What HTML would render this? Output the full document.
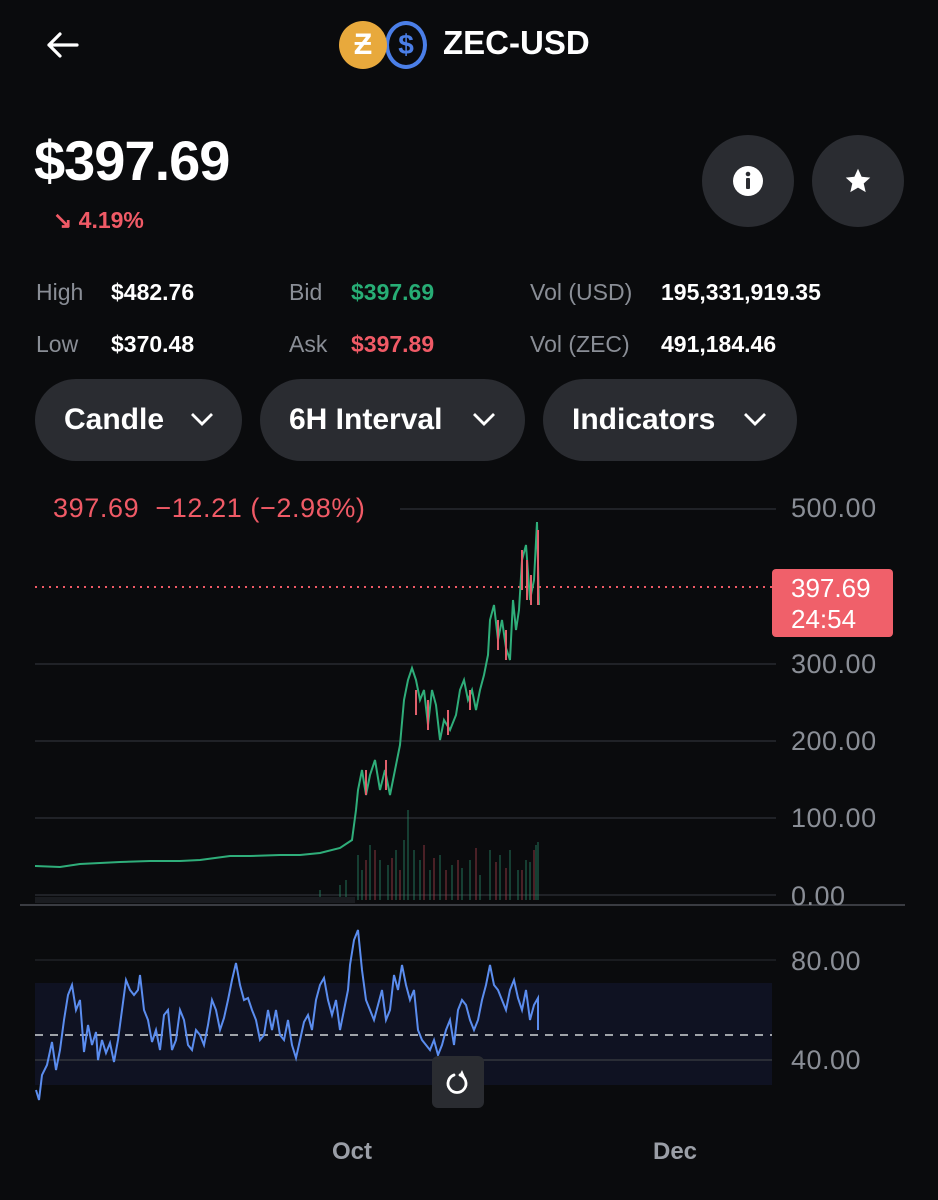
<!DOCTYPE html>
<html><head><meta charset="utf-8"><style>
*{margin:0;padding:0;box-sizing:border-box}
body{width:938px;height:1200px;background:#0a0b0d;color:#fff;font-family:"Liberation Sans",sans-serif;position:relative;overflow:hidden}
.a{position:absolute;white-space:nowrap}
.pill{position:absolute;top:379px;height:82px;border-radius:41px;background:#2a2c31;font-size:30px;font-weight:bold;line-height:82px;color:#fff;padding-left:29px}
.pill svg{position:absolute;top:32px}
.lbl{color:#8a8e96;font-size:23px}
.val{font-size:23px;font-weight:bold}
.ax{color:#8a8e96;font-size:27px;left:791px;letter-spacing:0.5px}
.circ{position:absolute;top:135px;width:92px;height:92px;border-radius:50%;background:#2a2c31}
</style></head><body>
<svg class="a" style="left:44px;top:30px" width="36" height="30" viewBox="0 0 36 30"><path d="M33 15H5M16 4L5 15l11 11" stroke="#fff" stroke-width="3.2" fill="none" stroke-linecap="round" stroke-linejoin="round"/></svg>
<div class="a" style="left:385px;top:21px;width:42px;height:48px;border-radius:50%;border:4px solid #4b7fe8;background:#0a0b0d;color:#4b7fe8;font-size:28px;font-weight:bold;text-align:center;line-height:40px">$</div>
<div class="a" style="left:339px;top:21px;width:48px;height:48px;border-radius:50%;background:#e8a93c;color:#fff;font-size:30px;font-weight:bold;text-align:center;line-height:48px">Ƶ</div>
<div class="a" style="left:443px;top:24px;font-size:33px;font-weight:bold">ZEC-USD</div>
<div class="a" style="left:34px;top:128px;font-size:56px;font-weight:bold;letter-spacing:-1px">$397.69</div>
<div class="a" style="left:53px;top:207px;font-size:23px;color:#f05a66;font-weight:bold">↘ 4.19%</div>
<div class="circ" style="left:702px"><svg style="position:absolute;left:31px;top:31px" width="30" height="30" viewBox="0 0 30 30"><circle cx="15" cy="15" r="15" fill="#fff"/><rect x="13" y="12" width="4" height="11" rx="1" fill="#2a2c31"/><circle cx="15" cy="8" r="2.3" fill="#2a2c31"/></svg></div>
<div class="circ" style="left:812px"><svg style="position:absolute;left:32px;top:32px" width="28" height="28" viewBox="0 0 24 24"><path d="M12 1.5l3.1 6.9 7.4.7-5.6 5 1.7 7.4L12 17.7l-6.6 3.8 1.7-7.4-5.6-5 7.4-.7z" fill="#fff"/></svg></div>
<div class="a lbl" style="left:36px;top:279px">High</div><div class="a val" style="left:111px;top:279px">$482.76</div>
<div class="a lbl" style="left:289px;top:279px">Bid</div><div class="a val" style="left:351px;top:279px;color:#27ad75">$397.69</div>
<div class="a lbl" style="left:530px;top:279px">Vol (USD)</div><div class="a val" style="left:661px;top:279px">195,331,919.35</div>
<div class="a lbl" style="left:36px;top:331px">Low</div><div class="a val" style="left:111px;top:331px">$370.48</div>
<div class="a lbl" style="left:289px;top:331px">Ask</div><div class="a val" style="left:351px;top:331px;color:#f05a66">$397.89</div>
<div class="a lbl" style="left:530px;top:331px">Vol (ZEC)</div><div class="a val" style="left:661px;top:331px">491,184.46</div>
<div class="pill" style="left:35px;width:207px">Candle<svg style="left:155px" width="24" height="16" viewBox="0 0 24 16"><path d="M2 3l10 10L22 3" stroke="#fff" stroke-width="2.8" fill="none"/></svg></div>
<div class="pill" style="left:260px;width:265px">6H Interval<svg style="left:212px" width="24" height="16" viewBox="0 0 24 16"><path d="M2 3l10 10L22 3" stroke="#fff" stroke-width="2.8" fill="none"/></svg></div>
<div class="pill" style="left:543px;width:254px">Indicators<svg style="left:200px" width="24" height="16" viewBox="0 0 24 16"><path d="M2 3l10 10L22 3" stroke="#fff" stroke-width="2.8" fill="none"/></svg></div>

<svg class="a" style="left:0;top:0" width="938" height="1200">
<g stroke="#202227" stroke-width="2">
<line x1="400" y1="509" x2="776" y2="509"/><line x1="35" y1="664" x2="776" y2="664"/><line x1="35" y1="741" x2="776" y2="741"/><line x1="35" y1="818" x2="776" y2="818"/><line x1="35" y1="895" x2="776" y2="895"/>
</g>
<line x1="20" y1="905" x2="905" y2="905" stroke="#3a3c42" stroke-width="2"/>
<line x1="35" y1="587" x2="772" y2="587" stroke="#f05a66" stroke-width="2" stroke-dasharray="2 5"/>
<g stroke-width="1.5" opacity="0.55">
<path d="M358 900V855M362 900V870M370 900V845M380 900V860M388 900V865M396 900V850M404 900V840M408 900V810M414 900V850M420 900V860M430 900V870M440 900V855M452 900V865M462 900V868M470 900V860M480 900V875M490 900V850M500 900V855M510 900V850M518 900V870M526 900V860M530 900V862M536 900V845M538 900V842M320 900V890M340 900V885M346 900V880" stroke="#2a8a66"/>
<path d="M366 900V860M375 900V850M392 900V858M400 900V870M424 900V845M434 900V858M446 900V870M458 900V860M476 900V848M496 900V862M506 900V868M522 900V870M534 900V850" stroke="#a6404c"/>
</g>
<rect x="35" y="897" width="320" height="6" fill="#1a1c20"/>
<polyline fill="none" stroke="#2fae7a" stroke-width="2" points="35,866 60,867 80,864 100,863 120,862 150,861 180,861 200,860 230,856 250,856 280,855 300,855 320,853 340,848 352,840 356,810 358,790 362,770 366,795 370,775 375,760 380,790 385,770 390,795 395,770 400,745 404,700 408,680 412,668 416,680 420,700 424,690 428,725 432,690 436,705 440,740 444,720 450,730 456,715 460,690 464,680 468,700 472,690 476,710 480,690 484,675 488,655 490,620 494,605 498,640 502,620 506,648 510,660 513,600 516,630 519,610 522,560 526,545 530,600 534,580 537,522 539,605"/>
<g stroke="#e0606c" stroke-width="2" fill="none"><path d="M366 770v25M386 760v30M416 690v25M428 700v30M448 710v25M470 690v20M498 620v30M506 630v30M522 550v40M527 560v40M531 575v30M538 530v75"/></g>
<g stroke="#1a1c20" stroke-width="2"><line x1="35" y1="960" x2="776" y2="960"/></g>
<rect x="35" y="983" width="737" height="102" fill="#0f1222"/>
<line x1="35" y1="1060" x2="772" y2="1060" stroke="#2a2d36" stroke-width="2"/>
<line x1="35" y1="1035" x2="772" y2="1035" stroke="#a0a4aa" stroke-width="2" stroke-dasharray="8 7"/>
<polyline fill="none" stroke="#5b8def" stroke-width="2" points="36,1090 39,1100 42,1075 47,1065 52,1042 56,1070 60,1050 64,1020 68,995 72,985 76,1010 80,1000 84,1052 88,1025 92,1045 96,1032 98,1060 102,1040 106,1053 110,1043 114,1062 118,1040 122,1010 126,980 130,990 134,995 138,990 140,975 144,1010 148,1020 152,1042 156,1030 160,1050 164,1015 168,1010 172,1050 176,1040 180,1010 184,1020 188,1045 192,1050 196,1030 200,1035 204,1045 208,1025 212,1000 216,1010 220,1030 224,1018 228,1000 232,980 236,963 240,985 244,1000 248,998 252,1010 256,1020 260,1040 264,1035 268,1010 272,1030 276,1010 280,1035 284,1040 288,1020 292,1045 296,1058 300,1040 304,1022 308,1015 312,1030 316,1000 320,985 324,978 328,1000 332,1015 336,1000 340,1030 344,1010 348,990 350,965 354,940 358,930 362,970 366,1000 370,1010 374,1020 378,1005 382,990 386,1020 390,1010 394,975 398,990 402,965 406,985 410,1000 414,990 418,1030 422,1040 426,1045 430,1050 434,1040 438,1055 442,1045 446,1030 450,1020 454,1045 458,1010 462,1000 466,1005 470,1020 474,1030 478,1020 482,1000 486,985 490,965 494,985 498,990 502,1000 506,1010 510,990 514,980 518,998 522,1010 526,990 530,1020 534,1005 538,998 538,1030"/>
</svg>

<div class="a" style="left:53px;top:493px;font-size:27px;color:#f05a66;letter-spacing:0.6px">397.69&nbsp; −12.21 (−2.98%)</div>
<div class="a ax" style="top:493px">500.00</div>
<div class="a" style="left:772px;top:569px;width:121px;height:68px;background:#f0606a;border-radius:4px;color:#fff;font-size:26px;line-height:31px;padding:4px 0 0 19px">397.69<br>24:54</div>
<div class="a ax" style="top:649px">300.00</div>
<div class="a ax" style="top:726px">200.00</div>
<div class="a ax" style="top:803px">100.00</div>
<div class="a ax" style="top:881px">0.00</div>
<div class="a ax" style="top:946px">80.00</div>
<div class="a ax" style="top:1045px">40.00</div>
<div class="a" style="left:432px;top:1056px;width:52px;height:52px;border-radius:6px;background:#2a2c31"><svg style="position:absolute;left:13px;top:13px" width="26" height="26" viewBox="0 0 26 26"><path d="M9 6a9 9 0 1 0 6 0" stroke="#fff" stroke-width="2.8" fill="none" stroke-linecap="round"/><path d="M17 1l-3 6 6 1z" fill="#fff"/></svg></div>
<div class="a" style="left:332px;top:1138px;font-size:24px;font-weight:bold;color:#9a9ea6">Oct</div>
<div class="a" style="left:653px;top:1138px;font-size:24px;font-weight:bold;color:#9a9ea6">Dec</div>
</body></html>
